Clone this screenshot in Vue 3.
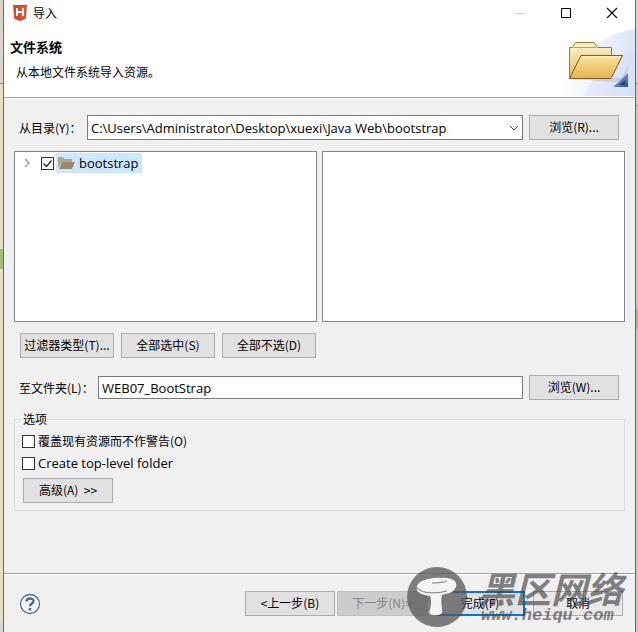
<script setup>
import { ref } from 'vue'

const source = ref('C:\\Users\\Administrator\\Desktop\\xuexi\\Java Web\\bootstrap')
const target = ref('WEB07_BootStrap')
const checked = ref(true)
const overwrite = ref(false)
const topLevel = ref(false)
</script>

<template>
  <div class="desktop">
    <div class="behind left"></div>
    <main class="dialog">
      <header class="banner">
        <div class="titlebar">
          <svg class="logo" viewBox="0 0 14 16">
            <path d="M0 0h14l-1.2 13.7L7 16l-5.800-2.300z" fill="#d84a27" />
            <path d="M7 1h6l-1 12-5 2z" fill="#e2562f" />
            <path d="M4 3v8M10 3v8M4 7h6" stroke="#fff" stroke-width="2" fill="none" />
          </svg>
          <span class="caption">导入</span>
          <button class="win" disabled aria-label="最小化">
            <svg viewBox="0 0 12 12"><path d="M1 6.500h10" stroke="#ccc" /></svg>
          </button>
          <button class="win" aria-label="最大化">
            <svg viewBox="0 0 12 12"><path d="M1.500 1.500h9v9h-9z" fill="none" stroke="#000" /></svg>
          </button>
          <button class="win" aria-label="关闭">
            <svg viewBox="0 0 12 12"><path d="M1 1l10 10M11 1L1 11" stroke="#000" stroke-width="1.100" /></svg>
          </button>
        </div>
        <h1>文件系统</h1>
        <p>从本地文件系统导入资源。</p>
        <svg class="art" viewBox="0 0 75 70">
          <defs>
            <linearGradient id="sky" x1="0" x2="1" y1="0" y2="0">
              <stop offset="0" stop-color="#fff" />
              <stop offset="1" stop-color="#dce5f7" />
            </linearGradient>
            <linearGradient id="back" x1="0" x2="0" y1="0" y2="1">
              <stop offset="0" stop-color="#fdf5d0" />
              <stop offset="1" stop-color="#e3bd62" />
            </linearGradient>
            <linearGradient id="front" x1="0" x2="0" y1="0" y2="1">
              <stop offset="0" stop-color="#f9e3a2" />
              <stop offset="1" stop-color="#e6b34d" />
            </linearGradient>
            <linearGradient id="corner" x1="0" x2="1" y1="0" y2="1">
              <stop offset="0" stop-color="#b9d0ec" />
              <stop offset="1" stop-color="#234d8b" />
            </linearGradient>
          </defs>
          <path d="M0 70C12 30 42 8 75 3v67z" fill="url(#sky)" />
          <path d="M24 70C36 44 53 30 75 25v45z" fill="#cedbf3" opacity=".4" />
          <path d="M9 53l52-1 9-14-6 15-9 3z" fill="#9a92a8" opacity=".3" />
          <path d="M9.500 52V21.500h3l3-5H34l3.500 5h14V51z" fill="url(#back)" stroke="#a37a2a" />
          <path d="M14 21.500h22" stroke="#c49d4c" />
          <path d="M9.500 52.500L21 29.500h41.500L51 52.500z" fill="url(#front)" stroke="#805d18" />
          <path d="M22 31h38" stroke="#fff3c4" />
          <path d="M68 47v14H53z" fill="url(#corner)" />
          <path d="M65 54v5h-6z" fill="#1e467f" />
        </svg>
      </header>

      <section class="content">
        <div class="row source">
          <label for="source">从目录(Y)：</label>
          <select id="source" v-model="source">
            <option>{{ source }}</option>
          </select>
          <button class="btn">浏览(R)...</button>
        </div>

        <div class="panes">
          <div class="pane">
            <div class="node">
              <svg class="arrow" viewBox="0 0 6 10"><path d="M1 1l4 4-4 4" fill="none" stroke="#a6a6a6" stroke-width="1.600" /></svg>
              <input id="node" v-model="checked" type="checkbox">
              <label class="selected" for="node">
                <svg class="folder" viewBox="0 0 17 14">
                  <path d="M0 12V1h5l1.500 2H14v3H4z" fill="#b1a58d" />
                  <path d="M4 6h13l-3 7H1z" fill="#998a6c" />
                </svg>
                bootstrap
              </label>
            </div>
          </div>
          <div class="pane"></div>
        </div>

        <div class="filters">
          <button class="btn">过滤器类型(T)...</button>
          <button class="btn">全部选中(S)</button>
          <button class="btn">全部不选(D)</button>
        </div>

        <div class="row target">
          <label for="target">至文件夹(L)：</label>
          <input id="target" v-model="target" type="text">
          <button class="btn">浏览(W)...</button>
        </div>

        <fieldset>
          <legend>选项</legend>
          <label class="option"><input v-model="overwrite" type="checkbox">覆盖现有资源而不作警告(O)</label>
          <label class="option latin"><input v-model="topLevel" type="checkbox">Create top-level folder</label>
          <button class="btn">高级(A)&nbsp; &gt;&gt;</button>
        </fieldset>
      </section>

      <footer>
        <button class="help" aria-label="帮助">
          <svg viewBox="0 0 22 22">
            <circle cx="11" cy="11" r="9.500" fill="#f3f4f6" stroke="#5b6c91" stroke-width="1.300" />
            <path d="M7.500 8.500C7.500 4.500 14.500 4.500 14.500 8.200 14.500 10.500 11 10.500 11 13.200" fill="none" stroke="#56688f" stroke-width="2.400" />
            <path d="M9.700 15h2.600v2.500H9.700z" fill="#56688f" />
          </svg>
        </button>
        <button class="btn">&lt;上一步(B)</button>
        <button class="btn next" disabled>下一步(N)&gt;</button>
        <button class="btn finish">完成(F)</button>
        <button class="btn cancel">取消</button>
        <div class="watermark">
          <svg viewBox="0 0 60 60">
            <circle cx="30" cy="30" r="30" fill="#555" opacity=".75" />
            <path d="M10 19C12 12 27 10 40 11 50 12 52 19 46 24 43 27 36 27 35 28 33 35 36 42 35 46 32 49 25 49 22 46 24 40 25 34 23 29 16 28 8 26 10 19z" fill="#f4f4f4" />
            <path d="M10 21c7 7 22 5 30 3M25 16c4 0 7 0 11-1 3 0 4-1 3-2" fill="none" stroke="#777" />
          </svg>
          <div class="mark">
            <strong>黑区网络</strong>
            <em>www.heiqu.com</em>
          </div>
        </div>
      </footer>
    </main>
    <div class="behind right"></div>
  </div>
</template>

<style>
body {
  margin: 0;
}
</style>

<style scoped>
* {
  box-sizing: border-box;
}

.desktop {
  display: grid;
  grid-template-columns: 3px 1fr 2px;
  min-height: 100vh;
  font: 12px/16px "Noto Sans CJK SC", sans-serif;
  color: #000;
}

.left {
  background: linear-gradient(#d9d5cb 0 83px, #8a8a8a 83px 84px, #e6dfc8 84px 249px, #9fbd76 249px 269px, #e6dfc8 269px 622px, #d6d6d6 622px);
}

.right {
  background: linear-gradient(#d5d5d5 0 83px, #888 83px 84px, #d0ccc0 84px 105px, #888 105px 106px, #cbc6b5 106px 309px, #b8ad94 309px 329px, #cbc6b5 329px 622px, #c4c8cc 622px);
}

.dialog {
  display: flex;
  flex-direction: column;
  border: solid #2a7ab8;
  border-width: 0 1px;
  background: #f0f0f0;
}

.banner {
  position: relative;
  height: 99px;
  border-bottom: 1px solid #fff;
  background: #fff;
  box-shadow: inset 0 -1px #a0a0a0;
}

.titlebar {
  display: flex;
  align-items: center;
  height: 26px;
  padding-left: 9px;
}

.logo {
  width: 14px;
  height: 16px;
}

.caption {
  flex: 1;
  padding-left: 6px;
}

.win {
  display: flex;
  justify-content: center;
  width: 46px;
  padding: 0;
  border: 0;
  background: none;
}

.win svg {
  width: 12px;
  height: 12px;
}

h1 {
  margin: 13px 0 0 6px;
  font-size: 13px;
  line-height: 16px;
}

p {
  margin: 9px 0 0 12px;
}

.art {
  position: absolute;
  right: 0;
  bottom: 2px;
  width: 75px;
  height: 70px;
}

.content {
  flex: 1;
  padding: 16px 10px 0;
}

.row {
  display: flex;
  align-items: center;
  padding: 0 6px 0 5px;
}

.row label {
  flex: none;
}

.source label {
  width: 68px;
}

.target label {
  width: 79px;
}

.btn {
  flex: none;
  width: 90px;
  height: 25px;
  padding: 0 0 2px;
  border: 1px solid #adadad;
  background: #e1e1e1;
  color: #000;
  font: inherit;
  white-space: nowrap;
}

.row .btn {
  margin-left: 6px;
}

select,
input[type="text"] {
  flex: 1;
  min-width: 0;
  height: 25px;
  padding: 0 3px;
  border: 1px solid #7a7a7a;
  border-radius: 0;
  background: #fff;
  color: #000;
  font: 13px/16px "Open Sans", "Noto Sans CJK SC", sans-serif;
}

input[type="text"] {
  height: 23px;
}

select {
  appearance: none;
  background: #fff url("data:image/svg+xml,%3Csvg xmlns='http://www.w3.org/2000/svg' width='10' height='6'%3E%3Cpath d='M1 1l4 4 4-4' fill='none' stroke='%23444'/%3E%3C/svg%3E") no-repeat right 3px center;
}

.panes {
  display: grid;
  grid-template-columns: 1fr 1fr;
  gap: 5px;
  margin-top: 11px;
}

.pane {
  height: 171px;
  border: 1px solid #828790;
  background: #fff;
}

.node {
  display: flex;
  align-items: center;
  height: 22px;
  padding-left: 9px;
}

.arrow {
  width: 6px;
  height: 10px;
  margin-right: 11px;
}

.selected {
  display: flex;
  align-items: center;
  gap: 4px;
  height: 20px;
  margin-left: 2px;
  padding: 0 3px 0 2px;
  background: #cce8ff;
  font-family: "Open Sans", sans-serif;
  font-size: 13px;
}

.folder {
  width: 17px;
  height: 14px;
}

input[type="checkbox"] {
  appearance: none;
  width: 13px;
  height: 13px;
  margin: 0;
  border: 1px solid #333;
  background: #fff;
}

input[type="checkbox"]:checked {
  background: #fff url("data:image/svg+xml,%3Csvg xmlns='http://www.w3.org/2000/svg' width='11' height='11'%3E%3Cpath d='M1.500 5.500l3 3 5-6' fill='none' stroke='%23222' stroke-width='1.300'/%3E%3C/svg%3E") center no-repeat;
}

.filters {
  display: flex;
  gap: 7px;
  margin-top: 11px;
  padding-left: 6px;
}

.filters .btn {
  width: 94px;
}

.target {
  margin-top: 17px;
}

fieldset {
  margin: 11px 0 0;
  padding: 3px 7px 7px;
  border: 1px solid #dcdcdc;
}

legend {
  padding: 0 1px;
}

.option {
  display: flex;
  align-items: center;
  gap: 3px;
  height: 22px;
}

.latin {
  font-family: "Open Sans", sans-serif;
  font-size: 13px;
}

fieldset .btn {
  display: block;
  margin: 4px 0 0 1px;
}

footer {
  position: relative;
  display: flex;
  align-items: center;
  height: 59px;
  padding: 1px 12px 0 15px;
  border-top: 1px solid #a0a0a0;
  box-shadow: inset 0 1px #fff;
}

.help {
  width: 22px;
  height: 22px;
  margin-right: auto;
  padding: 0;
  border: 0;
  background: none;
}

.help svg {
  display: block;
}

.next {
  margin-left: 2px;
  border-color: #bfbfbf;
  background: #ccc;
  color: #838383;
}

.finish,
.cancel {
  margin-left: 8px;
}

.finish {
  border: 2px solid #0078d7;
}

.cancel {
  background: #e8e8e8;
}

.watermark {
  position: absolute;
  right: 11px;
  bottom: 5px;
  display: flex;
  align-items: center;
  gap: 12px;
  color: #444;
  pointer-events: none;
}

.watermark svg {
  width: 60px;
  height: 60px;
}

.mark {
  display: flex;
  flex-direction: column;
  width: 145px;
  opacity: .65;
}

.mark strong {
  font-size: 36px;
  font-style: italic;
  line-height: 32px;
}

.mark em {
  padding: 5px 0 0 2px;
  font: italic bold 17px/16px "Liberation Mono", monospace;
}
</style>
